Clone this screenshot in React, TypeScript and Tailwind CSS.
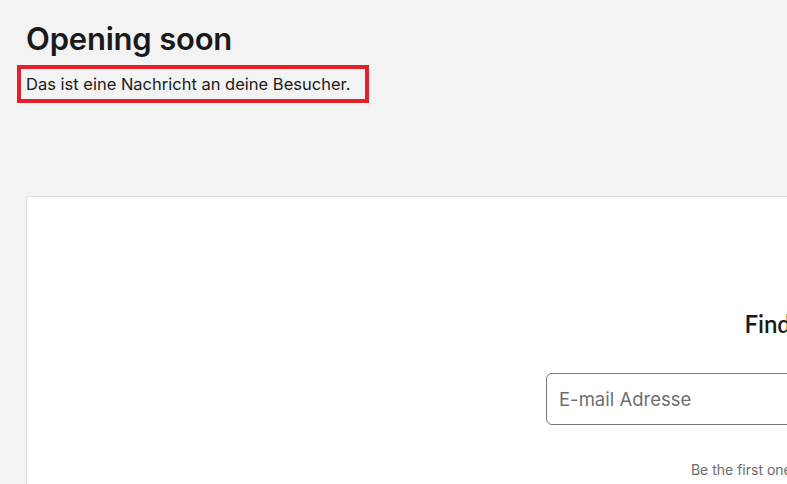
export default function App() {
  return (
    <div className="min-h-screen w-full overflow-hidden bg-[#f3f3f3] font-['Inter',sans-serif] text-[#1a1a1a]">
      <div className="px-[26px] pt-[19px]">
        <h1 className="text-[31px] font-semibold leading-[40px] tracking-[-0.2px]">
          Opening soon
        </h1>
        <div className="mt-[6px] -ml-[9px] inline-block border-4 border-[#e4202a] pl-[5px] pr-[15px] py-[3px] text-[16.5px] leading-[24px]">
          Das ist eine Nachricht an deine Besucher.
        </div>
        <div className="mt-[93px] w-[1300px] h-[600px] rounded-[3px] border border-[#e0e0e0] bg-white pl-[519px] pt-[111px]">
          <div className="flex w-[646px] flex-col items-center">
            <h2 className="font-['Lato',sans-serif] text-[24px] font-semibold leading-[32px] text-[#1a1a1a]">
              Find out when we open
            </h2>
            <input
              type="email"
              placeholder="E-mail Adresse"
              className="mt-[33px] h-[52px] w-full rounded-md border border-[#757575] px-[12px] text-[18.5px] text-[#1a1a1a] placeholder:text-[#6f6f6f] outline-none"
            />
            <p className="mt-[35px] ml-[12px] text-[14px] leading-[20px] text-[#6b6b6b]">
              Be the first one to know when we open our online shop.
            </p>
          </div>
        </div>
      </div>
    </div>
  );
}
